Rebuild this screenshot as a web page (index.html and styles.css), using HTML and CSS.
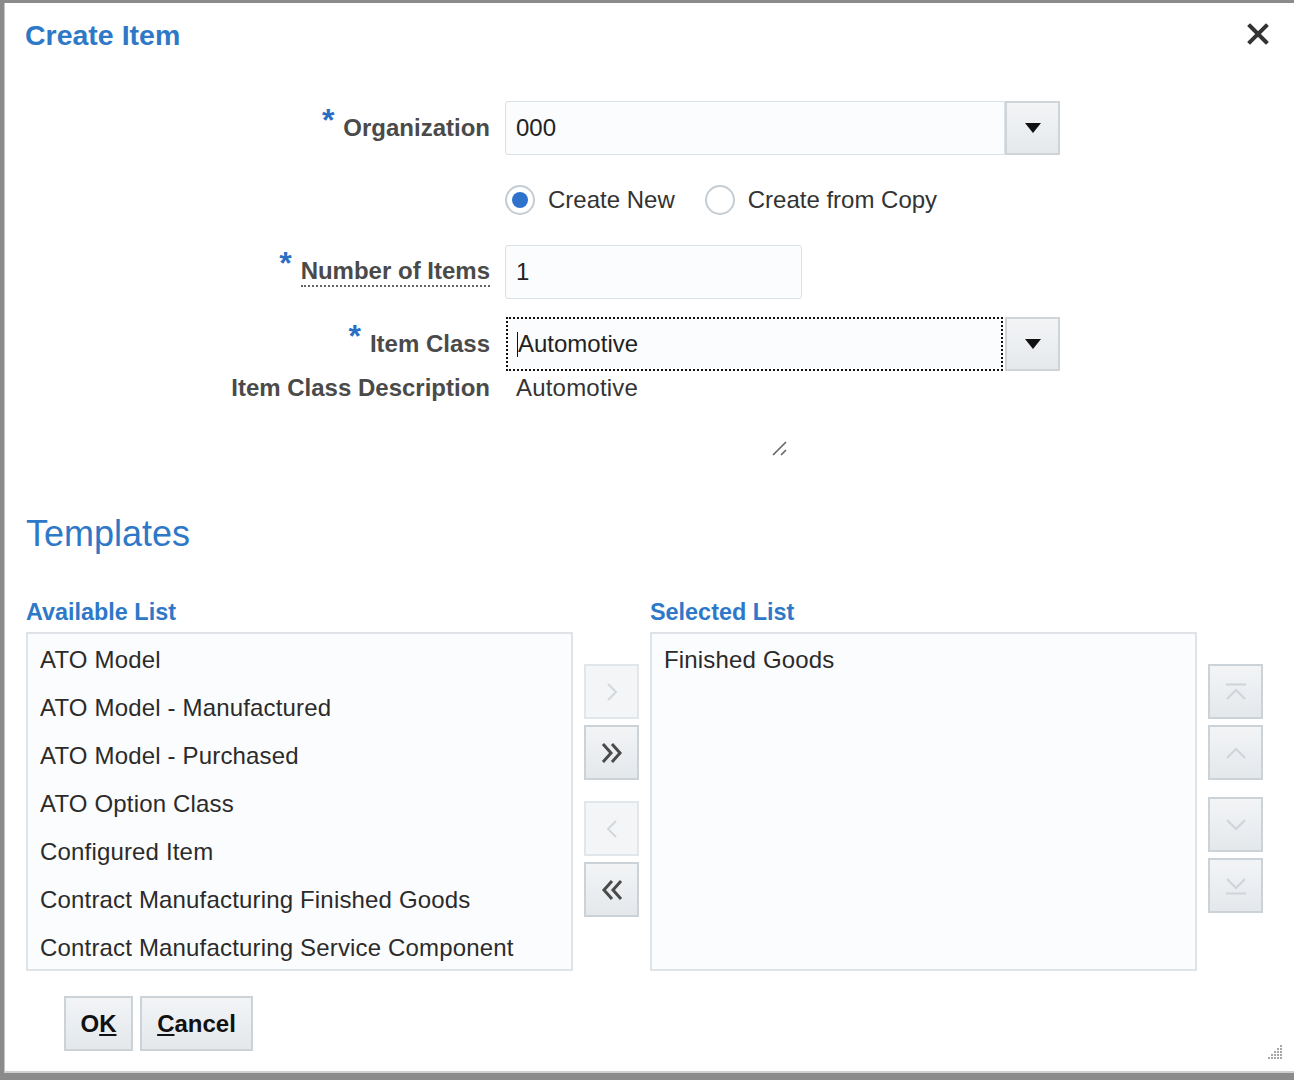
FILE: index.html
```html
<!DOCTYPE html>
<html lang="en">
<head>
<meta charset="utf-8">
<title>Create Item</title>
<link rel="stylesheet" href="styles.css">
</head>
<body>
<div class="dialog">
  <div class="header">
    <h1 class="title">Create Item</h1>
    <button class="close" aria-label="Close">
      <svg width="22" height="22" viewBox="0 0 22 22"><path d="M3 3 L19 19 M19 3 L3 19" stroke="#333" stroke-width="4" stroke-linecap="square"/></svg>
    </button>
  </div>

  <div class="form">
    <div class="row row-org">
      <div class="label"><span class="req">*</span>Organization</div>
      <div class="combo">
        <div class="input wide">000</div>
        <div class="drop"><svg width="18" height="12" viewBox="0 0 18 12"><path d="M1 1 H17 L9 11 Z" fill="#111"/></svg></div>
      </div>
    </div>

    <div class="row row-radio">
      <div class="label"></div>
      <div class="radios">
        <label class="radio"><span class="circle checked"></span>Create New</label>
        <label class="radio"><span class="circle"></span>Create from Copy</label>
      </div>
    </div>

    <div class="row row-num">
      <div class="label"><span class="req">*</span><span class="dotted">Number of Items</span></div>
      <div class="input narrow">1</div>
    </div>

    <div class="row row-class">
      <div class="label"><span class="req">*</span>Item Class</div>
      <div class="combo">
        <div class="input wide focus"><span class="caret"></span>Automotive</div>
        <div class="drop"><svg width="18" height="12" viewBox="0 0 18 12"><path d="M1 1 H17 L9 11 Z" fill="#111"/></svg></div>
      </div>
    </div>

    <div class="row row-desc">
      <div class="label">Item Class Description</div>
      <div class="value">Automotive</div>
    </div>

    <div class="grip-row">
      <svg width="18" height="18" viewBox="0 0 18 18"><path d="M2 15 L15 2 M10 15 L15 10" stroke="#666" stroke-width="1.6"/></svg>
    </div>
  </div>

  <h2 class="section">Templates</h2>

  <div class="shuttle">
    <div class="list-col">
      <div class="list-title">Available List</div>
      <div class="listbox">
        <div class="item">ATO Model</div>
        <div class="item">ATO Model - Manufactured</div>
        <div class="item">ATO Model - Purchased</div>
        <div class="item">ATO Option Class</div>
        <div class="item">Configured Item</div>
        <div class="item">Contract Manufacturing Finished Goods</div>
        <div class="item">Contract Manufacturing Service Component</div>
      </div>
    </div>

    <div class="move-col">
      <div class="btn-group">
        <button class="sbtn disabled"><svg width="14" height="22" viewBox="0 0 14 22"><path d="M3 3 L11 11 L3 19" fill="none" stroke="#d3d8dc" stroke-width="2"/></svg></button>
        <button class="sbtn"><svg width="24" height="22" viewBox="0 0 24 22"><path d="M3 2 L11 11 L3 20 M12 2 L20 11 L12 20" fill="none" stroke="#4a4a4a" stroke-width="3"/></svg></button>
      </div>
      <div class="btn-group">
        <button class="sbtn disabled"><svg width="14" height="22" viewBox="0 0 14 22"><path d="M11 3 L3 11 L11 19" fill="none" stroke="#d3d8dc" stroke-width="2"/></svg></button>
        <button class="sbtn"><svg width="24" height="22" viewBox="0 0 24 22"><path d="M21 2 L13 11 L21 20 M12 2 L4 11 L12 20" fill="none" stroke="#4a4a4a" stroke-width="3"/></svg></button>
      </div>
    </div>

    <div class="list-col">
      <div class="list-title">Selected List</div>
      <div class="listbox">
        <div class="item">Finished Goods</div>
      </div>
    </div>

    <div class="order-col">
      <div class="btn-group">
        <button class="sbtn"><svg width="26" height="20" viewBox="0 0 26 20"><path d="M3 2.5 H23 M4 17 L13 8 L22 17" fill="none" stroke="#cfd4d8" stroke-width="2"/></svg></button>
        <button class="sbtn"><svg width="26" height="20" viewBox="0 0 26 20"><path d="M4 15 L13 6 L22 15" fill="none" stroke="#cfd4d8" stroke-width="2"/></svg></button>
      </div>
      <div class="btn-group tight">
        <button class="sbtn"><svg width="26" height="20" viewBox="0 0 26 20"><path d="M4 5 L13 14 L22 5" fill="none" stroke="#cfd4d8" stroke-width="2"/></svg></button>
        <button class="sbtn"><svg width="26" height="20" viewBox="0 0 26 20"><path d="M4 3 L13 12 L22 3 M3 17.5 H23" fill="none" stroke="#cfd4d8" stroke-width="2"/></svg></button>
      </div>
    </div>
  </div>

  <div class="footer">
    <button class="fbtn ok">O<u>K</u></button>
    <button class="fbtn cancel"><u>C</u>ancel</button>
  </div>

  <div class="corner-grip">
    <svg width="20" height="18" viewBox="0 0 20 18">
      <g fill="#a8a8a8">
        <rect x="16" y="1" width="2" height="2"/>
        <rect x="13" y="4" width="2" height="2"/><rect x="16" y="4" width="2" height="2"/>
        <rect x="10" y="7" width="2" height="2"/><rect x="13" y="7" width="2" height="2"/><rect x="16" y="7" width="2" height="2"/>
        <rect x="7" y="10" width="2" height="2"/><rect x="10" y="10" width="2" height="2"/><rect x="13" y="10" width="2" height="2"/><rect x="16" y="10" width="2" height="2"/>
        <rect x="4" y="13" width="2" height="2"/><rect x="7" y="13" width="2" height="2"/><rect x="10" y="13" width="2" height="2"/><rect x="13" y="13" width="2" height="2"/><rect x="16" y="13" width="2" height="2"/>
      </g>
    </svg>
  </div>
</div>
</body>
</html>
```

FILE: styles.css
```css
* { box-sizing: border-box; }

html, body {
  margin: 0;
  padding: 0;
  height: 100%;
}

body {
  background: #8b8b8b;
  font-family: "Liberation Sans", Arial, Helvetica, sans-serif;
  font-size: 24px;
  color: #333;
  overflow: hidden;
}

.dialog {
  position: relative;
  margin: 3px 0 0 4px;
  height: 1070px;
  background: #fff;
  border-left: 1px solid #c4c4c4;
  border-bottom: 2px solid #cfcfcf;
}

.header {
  display: flex;
  justify-content: space-between;
  align-items: center;
  padding: 14px 25px 0 20px;
  height: 48px;
}

.title {
  margin: 0;
  font-size: 28.5px;
  line-height: 34px;
  font-weight: bold;
  color: #2e78c8;
  position: relative;
  top: 1px;
}

.close {
  border: 0;
  background: none;
  padding: 0;
  width: 22px;
  height: 22px;
  display: flex;
}

/* form */
.form {
  margin-top: 50px;
}

.row {
  display: flex;
  align-items: center;
  gap: 15px;
}

.label {
  width: 485px;
  flex: none;
  text-align: right;
  font-weight: bold;
  color: #4a4a4a;
}

.req {
  color: #2a6fc4;
  font-weight: bold;
  font-size: 32px;
  line-height: 20px;
  position: relative;
  top: -5px;
  margin-right: 9px;
}

.dotted {
  display: inline-block;
  line-height: 26px;
  border-bottom: 2px dotted #666;
  padding-bottom: 1px;
}

.row-org { height: 54px; }
.row-radio { height: 30px; margin-top: 30px; }
.row-num { height: 54px; margin-top: 30px; }
.row-class { height: 54px; margin-top: 18px; }
.row-desc { height: 28px; margin-top: 3px; }

.combo {
  display: flex;
  height: 54px;
}

.input {
  height: 54px;
  background: #fbfcfd;
  border: 1px solid #dce1e5;
  border-radius: 3px 0 0 3px;
  padding: 0 0 0 10px;
  display: flex;
  align-items: center;
  color: #222;
}

.input.wide { width: 500px; }
.input.narrow { width: 297px; border-radius: 3px; }

.input.focus {
  width: 497px;
  margin-left: 1px;
  border: 2px dotted #111;
  border-radius: 0;
  padding-left: 9px;
}

.caret {
  display: inline-block;
  width: 1px;
  height: 25px;
  background: #111;
  margin-right: 0;
}

.drop {
  width: 55px;
  height: 54px;
  margin-left: 0;
  background: linear-gradient(#f2f4f6, #e6e9ec);
  border: 2px solid #cdd4da;
  display: flex;
  align-items: center;
  justify-content: center;
}

.row-class .drop { margin-left: 2px; }

.radios {
  display: flex;
  align-items: center;
  gap: 30px;
}

.radio {
  display: flex;
  align-items: center;
  gap: 13px;
  color: #333;
}

.circle {
  width: 30px;
  height: 30px;
  border-radius: 50%;
  border: 2px solid #c5cdd4;
  background: #fff;
  display: flex;
  align-items: center;
  justify-content: center;
}

.circle.checked::after {
  content: "";
  width: 16px;
  height: 16px;
  border-radius: 50%;
  background: #2f72cc;
}

.value {
  padding-left: 11px;
  color: #333;
  letter-spacing: 0.2px;
}

.grip-row {
  padding-left: 766px;
  margin-top: 38px;
  height: 18px;
  display: flex;
}

/* templates */
.section {
  margin: 56px 0 0 21px;
  font-size: 36px;
  line-height: 40px;
  font-weight: normal;
  color: #2e78c8;
}

.shuttle {
  display: flex;
  align-items: flex-start;
  padding-left: 21px;
  margin-top: 44px;
}

.list-col {
  width: 547px;
  flex: none;
}

.list-title {
  font-weight: bold;
  font-size: 23.4px;
  color: #2e78c8;
  line-height: 28px;
  height: 28px;
}

.listbox {
  margin-top: 6px;
  height: 339px;
  background: #fbfcfd;
  border: 2px solid #dfe3e7;
  padding: 2px 0 0 12px;
  overflow: hidden;
}

.item {
  line-height: 48px;
  height: 48px;
  color: #2b2b2b;
  white-space: nowrap;
  letter-spacing: 0.17px;
}

.move-col, .order-col {
  width: 55px;
  flex: none;
  margin: 66px 11px 0;
  display: flex;
  flex-direction: column;
  gap: 21px;
}

.order-col { gap: 17px; }

.btn-group {
  display: flex;
  flex-direction: column;
  gap: 6px;
}

.sbtn {
  width: 55px;
  height: 55px;
  padding: 0;
  background: linear-gradient(#f2f4f6, #e5e8eb);
  border: 2px solid #cbd2d8;
  display: flex;
  align-items: center;
  justify-content: center;
}

.sbtn.disabled {
  background: #f3f5f7;
  border-color: #e1e6ea;
}

/* footer */
.footer {
  display: flex;
  gap: 7px;
  padding-left: 59px;
  margin-top: 25px;
}

.fbtn {
  height: 55px;
  padding: 0;
  background: linear-gradient(#f2f4f6, #e4e8eb);
  border: 2px solid #cbd2d8;
  font-family: "Liberation Sans", Arial, Helvetica, sans-serif;
  font-size: 24px;
  font-weight: bold;
  color: #111;
}

.fbtn.ok { width: 69px; }
.fbtn.cancel { width: 113px; }

.corner-grip {
  position: absolute;
  right: 10px;
  bottom: 13px;
  width: 20px;
  height: 18px;
}
```
